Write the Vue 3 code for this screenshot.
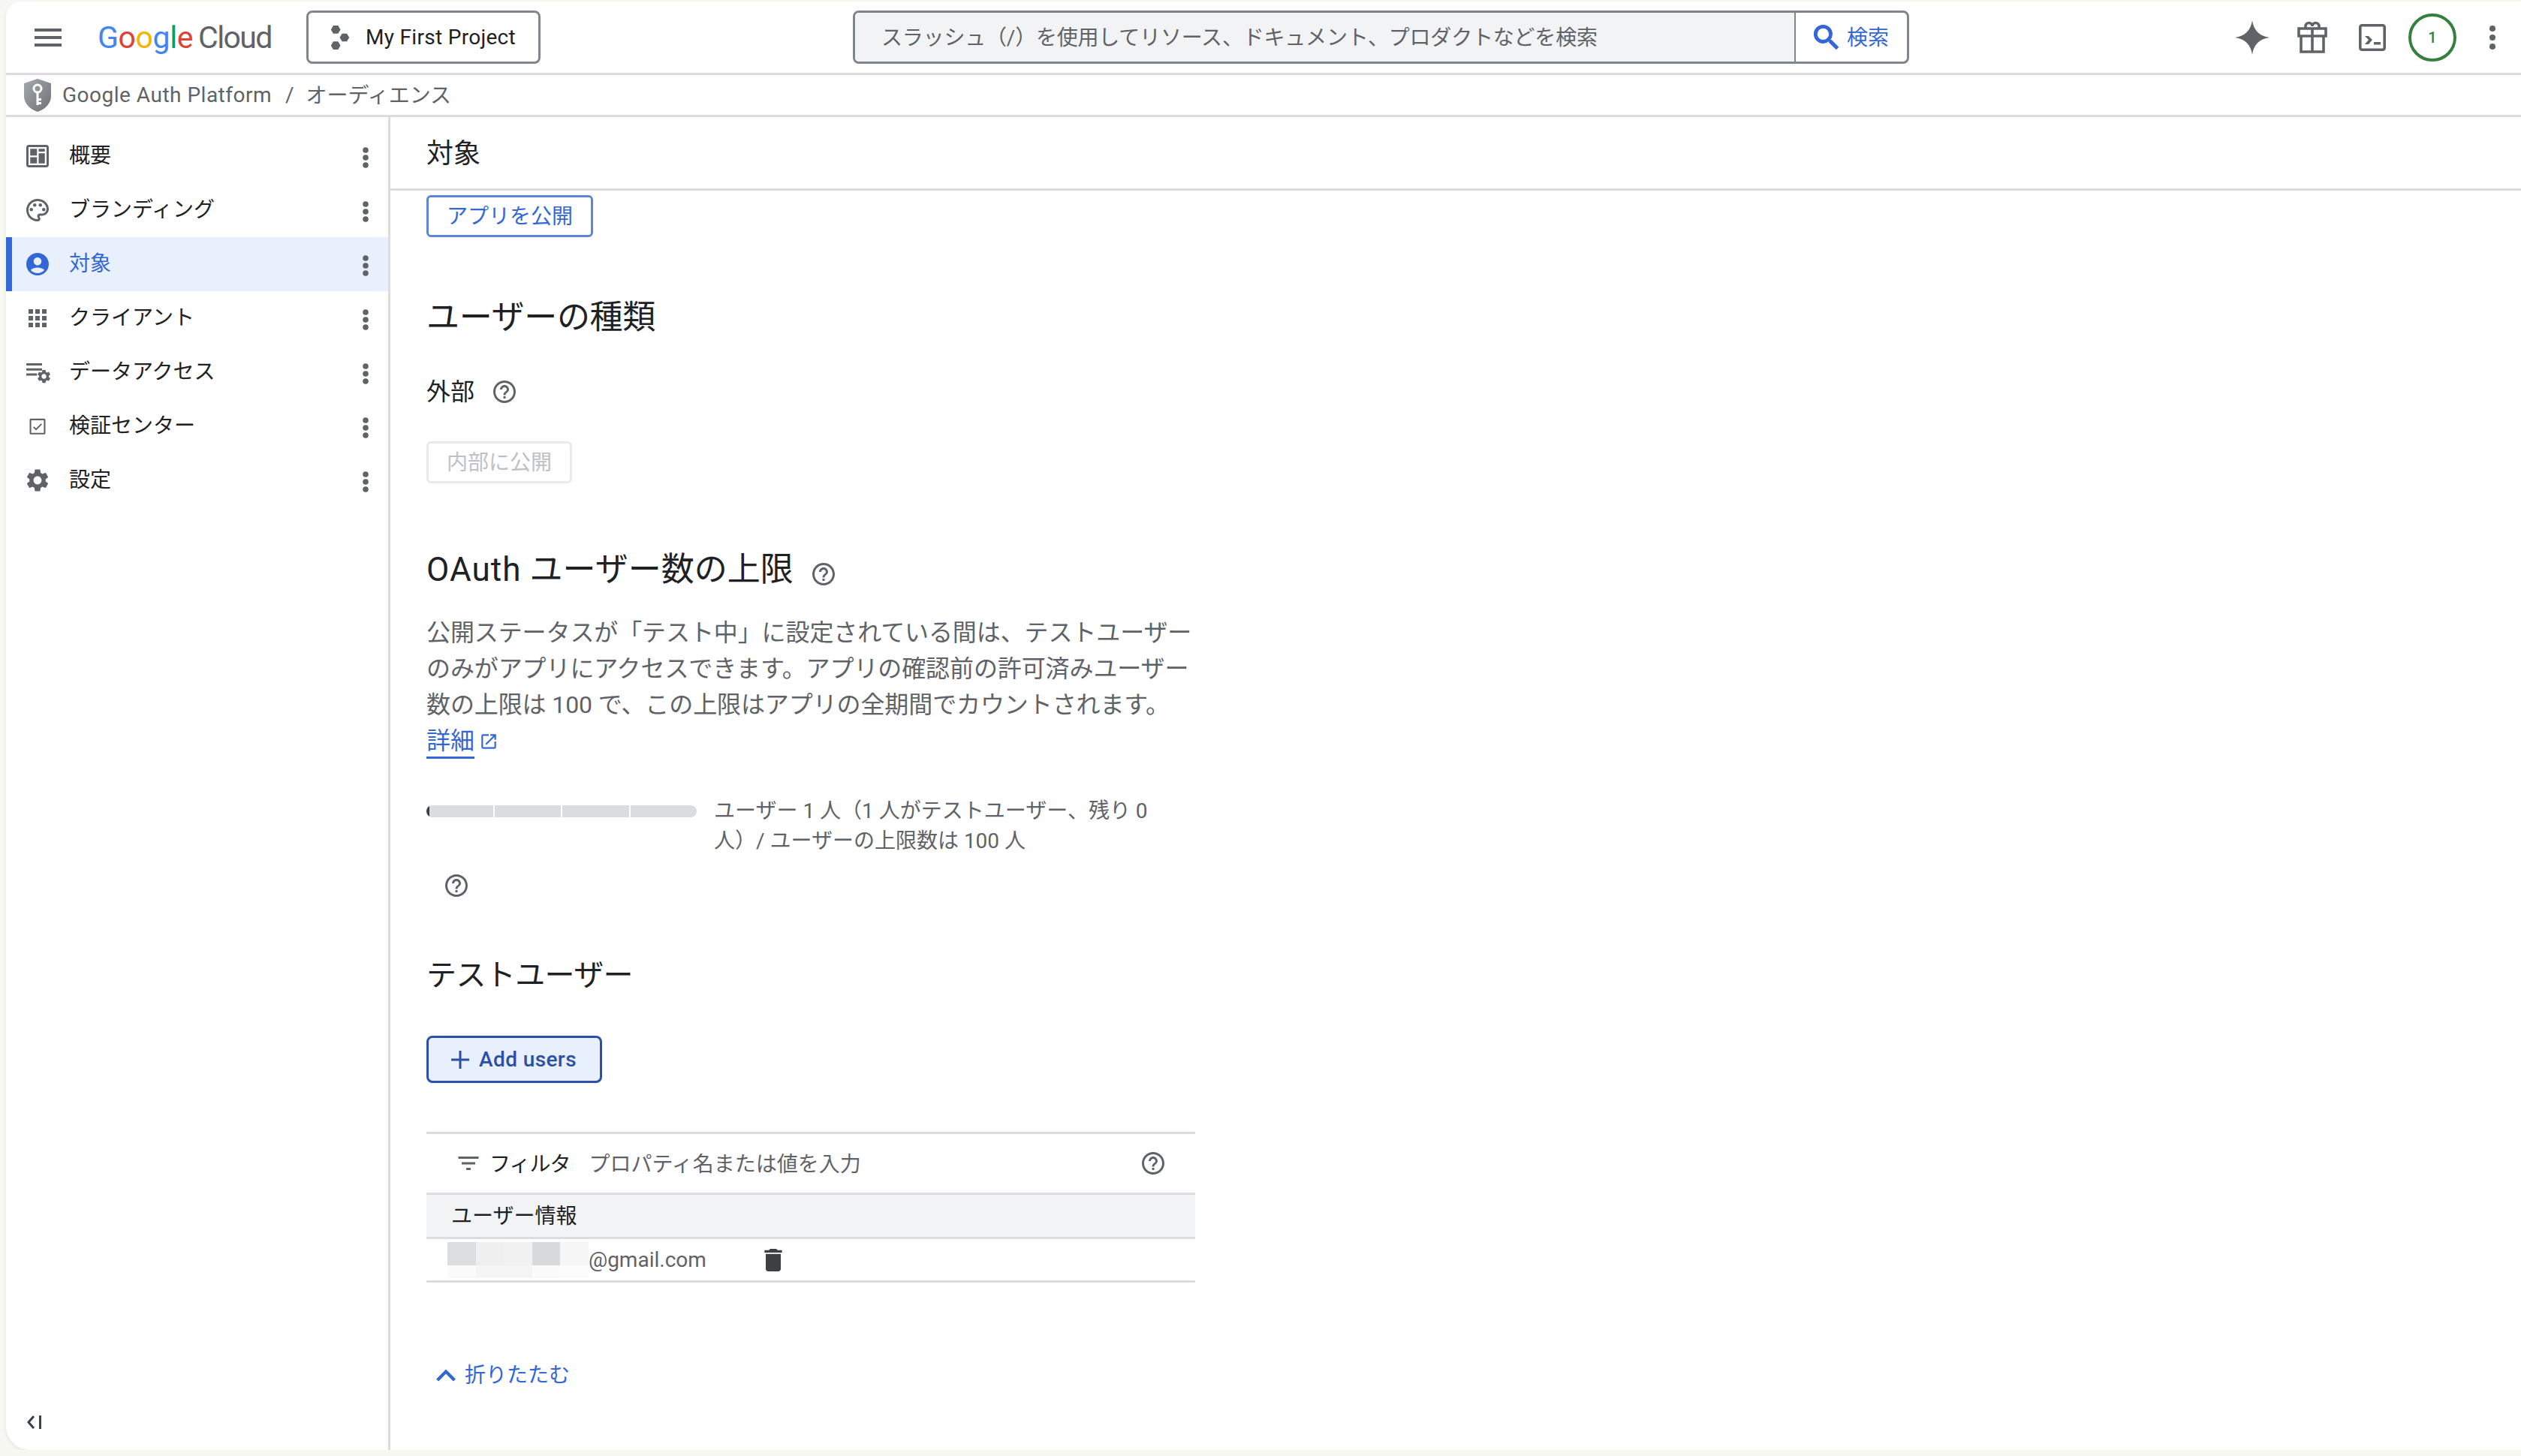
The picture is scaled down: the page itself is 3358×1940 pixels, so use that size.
<script setup>
const navItems = [
  { label: '概要', icon: 'overview' },
  { label: 'ブランディング', icon: 'palette' },
  { label: '対象', icon: 'audience', active: true },
  { label: 'クライアント', icon: 'apps' },
  { label: 'データアクセス', icon: 'data' },
  { label: '検証センター', icon: 'check' },
  { label: '設定', icon: 'gear' }
]

const gearPath = 'M19.14 12.94c.04-.3.06-.61.06-.94 0-.32-.02-.64-.07-.94l2.03-1.58c.18-.14.23-.41.12-.61l-1.92-3.32c-.12-.22-.37-.29-.59-.22l-2.39.96c-.5-.38-1.03-.7-1.62-.94l-.36-2.54c-.04-.24-.24-.41-.48-.41h-3.84c-.24 0-.43.17-.47.41l-.36 2.54c-.59.24-1.13.57-1.62.94l-2.39-.96c-.22-.08-.47 0-.59.22L2.74 8.87c-.12.21-.08.47.12.61l2.03 1.58c-.05.3-.09.63-.09.94s.02.64.07.94l-2.03 1.58c-.18.14-.23.41-.12.61l1.92 3.32c.12.22.37.29.59.22l2.39-.96c.5.38 1.03.7 1.62.94l.36 2.54c.05.24.24.41.48.41h3.84c.24 0 .44-.17.47-.41l.36-2.54c.59-.24 1.13-.56 1.62-.94l2.39.96c.22.08.47 0 .59-.22l1.92-3.32c.12-.22.07-.47-.12-.61l-2.01-1.58zM12 15.6c-1.98 0-3.6-1.62-3.6-3.6s1.62-3.6 3.6-3.6 3.6 1.62 3.6 3.6-1.62 3.6-3.6 3.6z'
const helpPath = 'M11 18h2v-2h-2v2zm1-16C6.48 2 2 6.48 2 12s4.48 10 10 10 10-4.48 10-10S17.52 2 12 2zm0 18c-4.41 0-8-3.59-8-8s3.59-8 8-8 8 3.59 8 8-3.59 8-8 8zm0-14c-2.21 0-4 1.79-4 4h2c0-1.1.9-2 2-2s2 .9 2 2c0 2-3 1.75-3 5h2c0-2.25 3-2.5 3-5 0-2.21-1.79-4-4-4z'

// mosaic over the redacted part of the address
const blurCells = [
  '#dcddde', '#efefef', '#f1f1f1', '#d9dadc', '#f6f6f6',
  '#fbfbfb', '#f5f5f5', '#f5f5f5', '#fbfbfb', '#fcfcfc'
]
</script>

<template>
  <div class="window">
    <header class="topbar">
      <svg class="menu" viewBox="0 0 36 24"><path d="M0 0h36v4H0zM0 10h36v4H0zM0 20h36v4H0z" /></svg>
      <div class="logo">
        <span class="g-blue">G</span><span class="g-red">o</span><span class="g-yellow">o</span><span class="g-blue">g</span><span class="g-green">l</span><span class="g-red">e</span>
        <span class="logo-cloud">Cloud</span>
      </div>
      <button class="project">
        <svg class="project-icon" viewBox="3 0 25 32">
          <path d="M7 1h6l3 5-3 5H7L4 6zM18 11h6l3 5-3 5h-6l-3-5zM7 21h6l3 5-3 5H7l-3-5z" />
        </svg>
        My First Project
      </button>
      <div class="search">
        <div class="search-input"><span>スラッシュ（/）を使用してリソース、ドキュメント、プロダクトなどを検索</span></div>
        <div class="search-btn">
          <svg viewBox="0 0 24 24"><path d="M15.5 14h-.79l-.28-.27A6.47 6.47 0 0 0 16 9.5 6.5 6.5 0 1 0 9.5 16c1.61 0 3.09-.59 4.23-1.57l.27.28v.79l5 4.99L20.49 19l-4.99-5zm-6 0C7.01 14 5 11.99 5 9.5S7.01 5 9.5 5 14 7.01 14 9.5 11.99 14 9.5 14z" /></svg>
          <span>検索</span>
        </div>
      </div>
      <div class="top-actions">
        <svg class="spark" viewBox="0 0 46 46"><path d="M23 0c1.6 12.8 9.6 21.4 23 23-13.4 1.6-21.4 10.2-23 23-1.6-12.8-9.6-21.4-23-23C13.4 21.400 21.400 12.800 23 0z" /></svg>
        <svg class="gift" viewBox="0 0 40 44" fill="none" stroke="#5f6368" stroke-width="3.600">
          <path d="M2 10h36v10H2zM5 20v21h30V20M20 10v31" />
          <path d="M11 10V7a4 4 0 0 1 9 0 4 4 0 0 1 9 0v3" />
        </svg>
        <svg class="term" viewBox="0 0 36 36">
          <rect x="1.800" y="1.800" width="32.400" height="32.400" rx="2.500" fill="none" stroke="#5f6368" stroke-width="3.600" />
          <path d="M8 16h5l5 5-5 6H8l5-6zM20 24h9v3.500h-9z" fill="#5f6368" />
        </svg>
        <div class="badge">1</div>
        <svg class="top-kebab" viewBox="0 0 8 32"><circle cx="4" cy="4" r="4" /><circle cx="4" cy="16" r="4" /><circle cx="4" cy="28" r="4" /></svg>
      </div>
    </header>

    <div class="crumbs">
      <svg class="shield" viewBox="0 0 36 44">
        <defs>
          <linearGradient id="shieldFill" x1="0" y1="0" x2="1" y2="1">
            <stop offset="0" stop-color="#a5a9ad" />
            <stop offset="1" stop-color="#6d7277" />
          </linearGradient>
        </defs>
        <path d="M18 0l18 6v17c0 10-8 17.500-18 21C8 40.500 0 33 0 23V6z" fill="url(#shieldFill)" />
        <circle cx="18" cy="13" r="5" fill="none" stroke="#fff" stroke-width="3" />
        <path d="M16.500 18h3v17h-3zM19 26h4v3h-4zM19 31h4v3h-4z" fill="#fff" />
      </svg>
      <span class="crumb-app">Google Auth Platform</span>
      <span class="crumb-sep">/</span>
      <span class="crumb-page">オーディエンス</span>
    </div>

    <div class="body">
      <aside class="sidebar">
        <nav>
          <div v-for="item in navItems" :key="item.label" class="nav-item" :class="{ active: item.active }">
            <svg class="nav-icon" viewBox="0 0 24 24">
              <template v-if="item.icon === 'overview'">
                <path fill-rule="evenodd" d="M4.500 2h15A2.500 2.500 0 0 1 22 4.500v15a2.500 2.500 0 0 1-2.500 2.500h-15A2.500 2.500 0 0 1 2 19.500v-15A2.500 2.500 0 0 1 4.500 2zM4 4v16h16V4z" />
                <path d="M5.500 5.500h6v6h-6zM13 5.500h5.500v2.500H13zM13 9.500h5.500v9H13zM5.500 13h6v5.500h-6z" />
              </template>
              <template v-else-if="item.icon === 'palette'">
                <path d="M12 22C6.490 22 2 17.510 2 12S6.490 2 12 2s10 4.040 10 9c0 3.310-2.690 6-6 6h-1.770c-.28 0-.5.22-.5.5 0 .12.05.23.13.33.41.47.64 1.060.64 1.670A2.500 2.500 0 0 1 12 22zm0-18c-4.410 0-8 3.590-8 8s3.590 8 8 8c.28 0 .5-.22.5-.5a.54.54 0 0 0-.14-.35c-.41-.46-.63-1.050-.63-1.650a2.500 2.500 0 0 1 2.500-2.500H16c2.210 0 4-1.790 4-4 0-3.860-3.590-7-8-7z" />
                <circle cx="6.500" cy="11.500" r="1.500" /><circle cx="9.500" cy="7.500" r="1.500" /><circle cx="14.500" cy="7.500" r="1.500" /><circle cx="17.500" cy="11.500" r="1.500" />
              </template>
              <path v-else-if="item.icon === 'audience'" d="M12 2C6.480 2 2 6.480 2 12s4.480 10 10 10 10-4.480 10-10S17.520 2 12 2zm0 4c1.930 0 3.500 1.570 3.500 3.500S13.930 13 12 13s-3.500-1.570-3.500-3.500S10.070 6 12 6zm0 14c-2.030 0-4.430-.82-6.140-2.880C7.550 15.800 9.680 15 12 15s4.450.8 6.140 2.120C16.430 19.180 14.030 20 12 20z" />
              <path v-else-if="item.icon === 'apps'" d="M4 8h4V4H4v4zm6 12h4v-4h-4v4zm-6 0h4v-4H4v4zm0-6h4v-4H4v4zm0-6zm6 6h4v-4h-4v4zm6-10v4h4V4h-4zm-6 4h4V4h-4v4zm6 6h4v-4h-4v4zm0 6h4v-4h-4v4z" />
              <template v-else-if="item.icon === 'data'">
                <path d="M2 4h14v2H2zM2 8.500h14v2H2zM2 13h9.500v2H2z" />
                <path :d="gearPath" transform="translate(10.500 8.500) scale(.6)" />
              </template>
              <template v-else-if="item.icon === 'check'">
                <path fill-rule="evenodd" d="M6 5.200h12a1 1 0 0 1 1 1v12a1 1 0 0 1-1 1H6a1 1 0 0 1-1-1v-12a1 1 0 0 1 1-1zM6.400 6.600v11.200h11.200V6.600z" />
                <path d="M10.700 15.700L8 13l.9-.9 1.800 1.800 4.400-4.400.9.9z" />
              </template>
              <path v-else :d="gearPath" />
            </svg>
            <span class="nav-label">{{ item.label }}</span>
            <svg class="nav-kebab" viewBox="0 0 8 28"><circle cx="4" cy="4" r="3.800" /><circle cx="4" cy="14" r="3.800" /><circle cx="4" cy="24" r="3.800" /></svg>
          </div>
        </nav>
        <svg class="collapse-nav" viewBox="0 0 20 20" fill="none" stroke="#3c4043" stroke-width="3">
          <path d="M9 2L2 10l7 8M17.500 1v18" />
        </svg>
      </aside>

      <main class="main">
        <div class="page-title"><span>対象</span></div>
        <div class="content">
          <button class="btn btn-publish">アプリを公開</button>

          <h2 class="sec-first">ユーザーの種類</h2>
          <div class="user-type">
            <span>外部</span>
            <svg class="help" viewBox="0 0 24 24"><path :d="helpPath" /></svg>
          </div>
          <button class="btn btn-disabled">内部に公開</button>

          <h2 class="sec-oauth">
            <span class="oauth-word">OAuth</span>&nbsp;ユーザー数の上限
            <svg class="help help-heading" viewBox="0 0 24 24"><path :d="helpPath" /></svg>
          </h2>
          <p class="desc">
            公開ステータスが「テスト中」に設定されている間は、テストユーザーのみがアプリにアクセスできます。アプリの確認前の許可済みユーザー数の上限は 100 で、この上限はアプリの全期間でカウントされます。
            <br />
            <a class="link">詳細</a>
            <svg class="ext" viewBox="0 0 24 24"><path d="M19 19H5V5h7V3H5c-1.110 0-2 .9-2 2v14c0 1.100.89 2 2 2h14c1.100 0 2-.9 2-2v-7h-2v7zM14 3v2h3.590l-9.830 9.830 1.410 1.410L19 6.410V10h2V3h-7z" /></svg>
          </p>

          <div class="quota">
            <div class="quota-bar">
              <span class="seg seg-first"><i class="seg-used"></i></span>
              <span class="seg"></span>
              <span class="seg"></span>
              <span class="seg seg-last"></span>
            </div>
            <div class="quota-text">ユーザー 1 人（1 人がテストユーザー、残り 0 人）/ ユーザーの上限数は 100 人</div>
          </div>
          <svg class="help help-quota" viewBox="0 0 24 24"><path :d="helpPath" /></svg>

          <h2 class="sec-test">テストユーザー</h2>
          <button class="btn-add">
            <svg viewBox="0 0 24 24"><path d="M10.500 0h3v10.500H24v3H13.500V24h-3V13.500H0v-3h10.500z" /></svg>
            Add users
          </button>

          <div class="table">
            <div class="filter-row">
              <svg class="filter-icon" viewBox="0 0 24 24"><path d="M10 18h4v-2h-4v2zM3 6v2h18V6H3zm3 7h12v-2H6v2z" /></svg>
              <span class="filter-label">フィルタ</span>
              <span class="filter-hint">プロパティ名または値を入力</span>
              <svg class="help filter-help" viewBox="0 0 24 24"><path :d="helpPath" /></svg>
            </div>
            <div class="head-row"><span>ユーザー情報</span></div>
            <div class="user-row">
              <div class="blur">
                <span v-for="(c, i) in blurCells" :key="i" :style="{ background: c }"></span>
              </div>
              <span class="email">@gmail.com</span>
              <svg class="trash" viewBox="0 0 24 24"><path d="M6 19c0 1.100.9 2 2 2h8c1.100 0 2-.9 2-2V7H6v12zM19 4h-3.500l-1-1h-5l-1 1H5v2h14V4z" /></svg>
            </div>
          </div>

          <div class="collapse">
            <svg viewBox="5.500 7 13 9"><path d="M7.410 15.410L12 10.830l4.590 4.580L18 14l-6-6-6 6z" /></svg>
            <span>折りたたむ</span>
          </div>
        </div>
      </main>
    </div>
  </div>
</template>

<style>
html, body {
  margin: 0;
  background: #f7f8f1;
  overflow: hidden;
}
</style>

<style scoped>
* {
  box-sizing: border-box;
}

.window {
  width: 3350px;
  height: 1930px;
  margin: 2px 0 0 8px;
  background: #fff;
  border-radius: 20px 0 0 32px;
  box-shadow: 0 2px 6px rgba(0, 0, 0, 0.08);
  display: flex;
  flex-direction: column;
  overflow: hidden;
  font-family: Roboto, "Noto Sans CJK JP", sans-serif;
  font-size: 28px;
  color: #202124;
}

/* top bar */
.topbar {
  height: 98px;
  flex: none;
  display: flex;
  align-items: center;
  border-bottom: 3px solid #dadce0;
}

.menu {
  width: 36px;
  height: 24px;
  margin-left: 38px;
  fill: #5f6368;
}

.logo {
  margin-left: 48px;
  width: 232px;
  font-size: 41px;
  letter-spacing: -0.4px;
  white-space: nowrap;
  color: #5f6368;
  display: flex;
}

.logo-cloud {
  margin-left: 7px;
  letter-spacing: -1.6px;
}

.g-blue { color: #4285f4; }
.g-red { color: #db4437; }
.g-yellow { color: #f4b400; }
.g-green { color: #0f9d58; }

.project {
  margin-left: 46px;
  width: 312px;
  height: 71px;
  padding: 0 0 0 28px;
  display: flex;
  align-items: center;
  gap: 20px;
  border: 3px solid #80868b;
  border-radius: 8px;
  background: #fff;
  font: inherit;
  letter-spacing: 0.3px;
  color: #202124;
}

.project-icon {
  width: 28px;
  height: 34px;
  fill: #5f6368;
}

.search {
  margin-left: 416px;
  width: 1407px;
  height: 71px;
  display: flex;
  border: 3px solid #80868b;
  border-radius: 8px;
  overflow: hidden;
}

.search-input {
  flex: 1;
  background: #f1f3f4;
  padding: 0 0 3px 35px;
  display: flex;
  align-items: center;
  letter-spacing: -0.2px;
  color: #5f6368;
  border-right: 2px solid #80868b;
}

.search-btn {
  width: 148px;
  display: flex;
  align-items: center;
  gap: 5px;
  padding-left: 19px;
  color: #3367d6;
}

.search-btn span {
  position: relative;
  top: -2px;
}

.search-btn svg {
  width: 44px;
  height: 44px;
  fill: #3367d6;
  stroke: #3367d6;
  stroke-width: 0.6;
}

.top-actions {
  margin-left: auto;
  display: flex;
  align-items: center;
}

.spark {
  width: 46px;
  height: 46px;
  fill: #5f6368;
}

.gift {
  width: 40px;
  height: 44px;
  margin-left: 37px;
}

.term {
  width: 36px;
  height: 36px;
  margin-left: 42px;
}

.badge {
  width: 64px;
  height: 64px;
  margin-left: 30px;
  border: 4px solid #34803e;
  border-radius: 50%;
  display: flex;
  align-items: center;
  justify-content: center;
  font-size: 20px;
  font-weight: 500;
  color: #34803e;
}

.top-kebab {
  width: 8px;
  height: 32px;
  margin: 0 34px 0 44px;
  fill: #5f6368;
}

/* breadcrumb */
.crumbs {
  height: 56px;
  flex: none;
  display: flex;
  align-items: center;
  padding-left: 24px;
  border-bottom: 3px solid #dadce0;
  color: #5f6368;
}

.shield {
  width: 36px;
  height: 44px;
}

.crumb-app {
  margin-left: 15px;
  letter-spacing: 0.5px;
}

.crumb-sep {
  margin-left: 18px;
}

.crumb-page {
  margin-left: 16px;
  position: relative;
  top: -2px;
}

/* left nav */
.body {
  flex: 1;
  display: flex;
  min-height: 0;
}

.sidebar {
  width: 512px;
  flex: none;
  padding-top: 16px;
  border-right: 3px solid #dadce0;
  display: flex;
  flex-direction: column;
}

.nav-item {
  height: 72px;
  display: flex;
  align-items: center;
  padding-left: 24px;
}

.nav-item.active {
  background: #e8effd;
  box-shadow: inset 8px 0 0 #3367d6;
  color: #3367d6;
}

.nav-icon {
  width: 36px;
  height: 36px;
  fill: #5f6368;
}

.active .nav-icon {
  fill: #3367d6;
}

.nav-label {
  margin-left: 24px;
  position: relative;
  top: -3px;
}

.nav-kebab {
  width: 8px;
  height: 28px;
  margin: 4px 26px 0 auto;
  fill: #5f6368;
}

.collapse-nav {
  width: 20px;
  height: 20px;
  margin: auto 0 27px 28px;
}

/* main column */
.main {
  flex: 1;
  min-width: 0;
}

.page-title {
  height: 98px;
  padding: 0 0 5px 48px;
  display: flex;
  align-items: center;
  font-size: 36px;
  border-bottom: 3px solid #dadce0;
}

.content {
  padding-left: 48px;
  width: 1072px;
}

.btn {
  display: block;
  height: 56px;
  padding: 0 24px 5px;
  border-radius: 6px;
  background: #fff;
  font: inherit;
}

.btn-publish {
  margin-top: 6px;
  border: 3px solid #5d84d6;
  color: #3367d6;
}

.btn-disabled {
  margin-top: 42px;
  border: 3px solid #e8eaed;
  color: #bdc1c6;
}

h2 {
  margin: 0;
  font-size: 44px;
  font-weight: 400;
  line-height: 60px;
}

.sec-first {
  margin-top: 77px;
  letter-spacing: -0.3px;
}

.sec-oauth {
  margin-top: 85px;
  display: flex;
  align-items: center;
}

.oauth-word {
  letter-spacing: 1.1px;
}

.sec-test {
  margin-top: 72px;
  margin-bottom: -2px;
  font-size: 40px;
  letter-spacing: -0.6px;
}

.user-type {
  margin-top: 45px;
  display: flex;
  align-items: center;
  gap: 22px;
  font-size: 32px;
  line-height: 48px;
}

.help {
  width: 36px;
  height: 36px;
  fill: #5f6368;
  flex: none;
}

.help-heading {
  margin: 12px 0 0 22px;
}

.desc {
  margin: 30px 0 0;
  font-size: 32px;
  line-height: 48px;
  letter-spacing: -0.1px;
  color: #5f6368;
}

.link {
  color: #3367d6;
  border-bottom: 3px solid #3367d6;
  padding-bottom: 2px;
}

.ext {
  width: 26px;
  height: 26px;
  margin-left: 6px;
  vertical-align: -3px;
  fill: #3367d6;
}

.quota {
  margin-top: 48px;
  display: flex;
  gap: 23px;
}

.quota-bar {
  width: 360px;
  height: 16px;
  margin-top: 14px;
  flex: none;
  display: flex;
  gap: 2px;
}

.seg {
  flex: 1;
  background: #dadce0;
  overflow: hidden;
}

.seg-first {
  border-radius: 8px 0 0 8px;
}

.seg-last {
  border-radius: 0 8px 8px 0;
}

.seg-used {
  display: block;
  width: 4px;
  height: 100%;
  background: #3c4043;
}

.quota-text {
  width: 600px;
  margin-top: 2px;
  line-height: 40px;
  color: #5f6368;
}

.help-quota {
  display: block;
  margin: 21px 0 0 22px;
}

.btn-add {
  margin-top: 52px;
  width: 234px;
  height: 63px;
  display: flex;
  align-items: center;
  gap: 13px;
  padding: 0 0 0 30px;
  background: #e8effd;
  border: 3px solid #2a50a8;
  border-radius: 8px;
  font: inherit;
  font-weight: 500;
  letter-spacing: 0.4px;
  color: #2a50a8;
}

.btn-add svg {
  width: 24px;
  height: 24px;
  fill: #2a50a8;
}

/* users table */
.table {
  margin-top: 65px;
  border-top: 3px solid #dadce0;
}

.filter-row {
  height: 81px;
  display: flex;
  align-items: center;
  padding: 0 38px 3px;
  border-bottom: 3px solid #dadce0;
}

.filter-icon {
  width: 36px;
  height: 36px;
  fill: #5f6368;
  margin-top: 3px;
}

.filter-label {
  margin-left: 10px;
  letter-spacing: -1px;
}

.filter-hint {
  margin-left: 25px;
  color: #5f6368;
}

.filter-help {
  margin: 3px 0 0 auto;
}

.head-row {
  height: 59px;
  display: flex;
  align-items: center;
  padding: 0 0 5px 33px;
  background: #f1f3f4;
  border-bottom: 3px solid #dadce0;
}

.user-row {
  height: 58px;
  display: flex;
  align-items: center;
  padding-left: 28px;
  border-bottom: 3px solid #dadce0;
}

.blur {
  width: 188px;
  height: 48px;
  display: grid;
  grid-template-columns: repeat(5, 1fr);
  grid-template-rows: 31px 17px;
}

.email {
  color: #5f6368;
}

.trash {
  width: 40px;
  height: 40px;
  margin-left: 69px;
  fill: #3c4043;
}

.collapse {
  margin: 99px 0 0 12px;
  height: 48px;
  display: flex;
  align-items: center;
  gap: 11px;
  color: #3367d6;
}

.collapse span {
  position: relative;
  top: -2px;
}

.collapse svg {
  width: 28px;
  height: 20px;
  fill: #3367d6;
}
</style>
